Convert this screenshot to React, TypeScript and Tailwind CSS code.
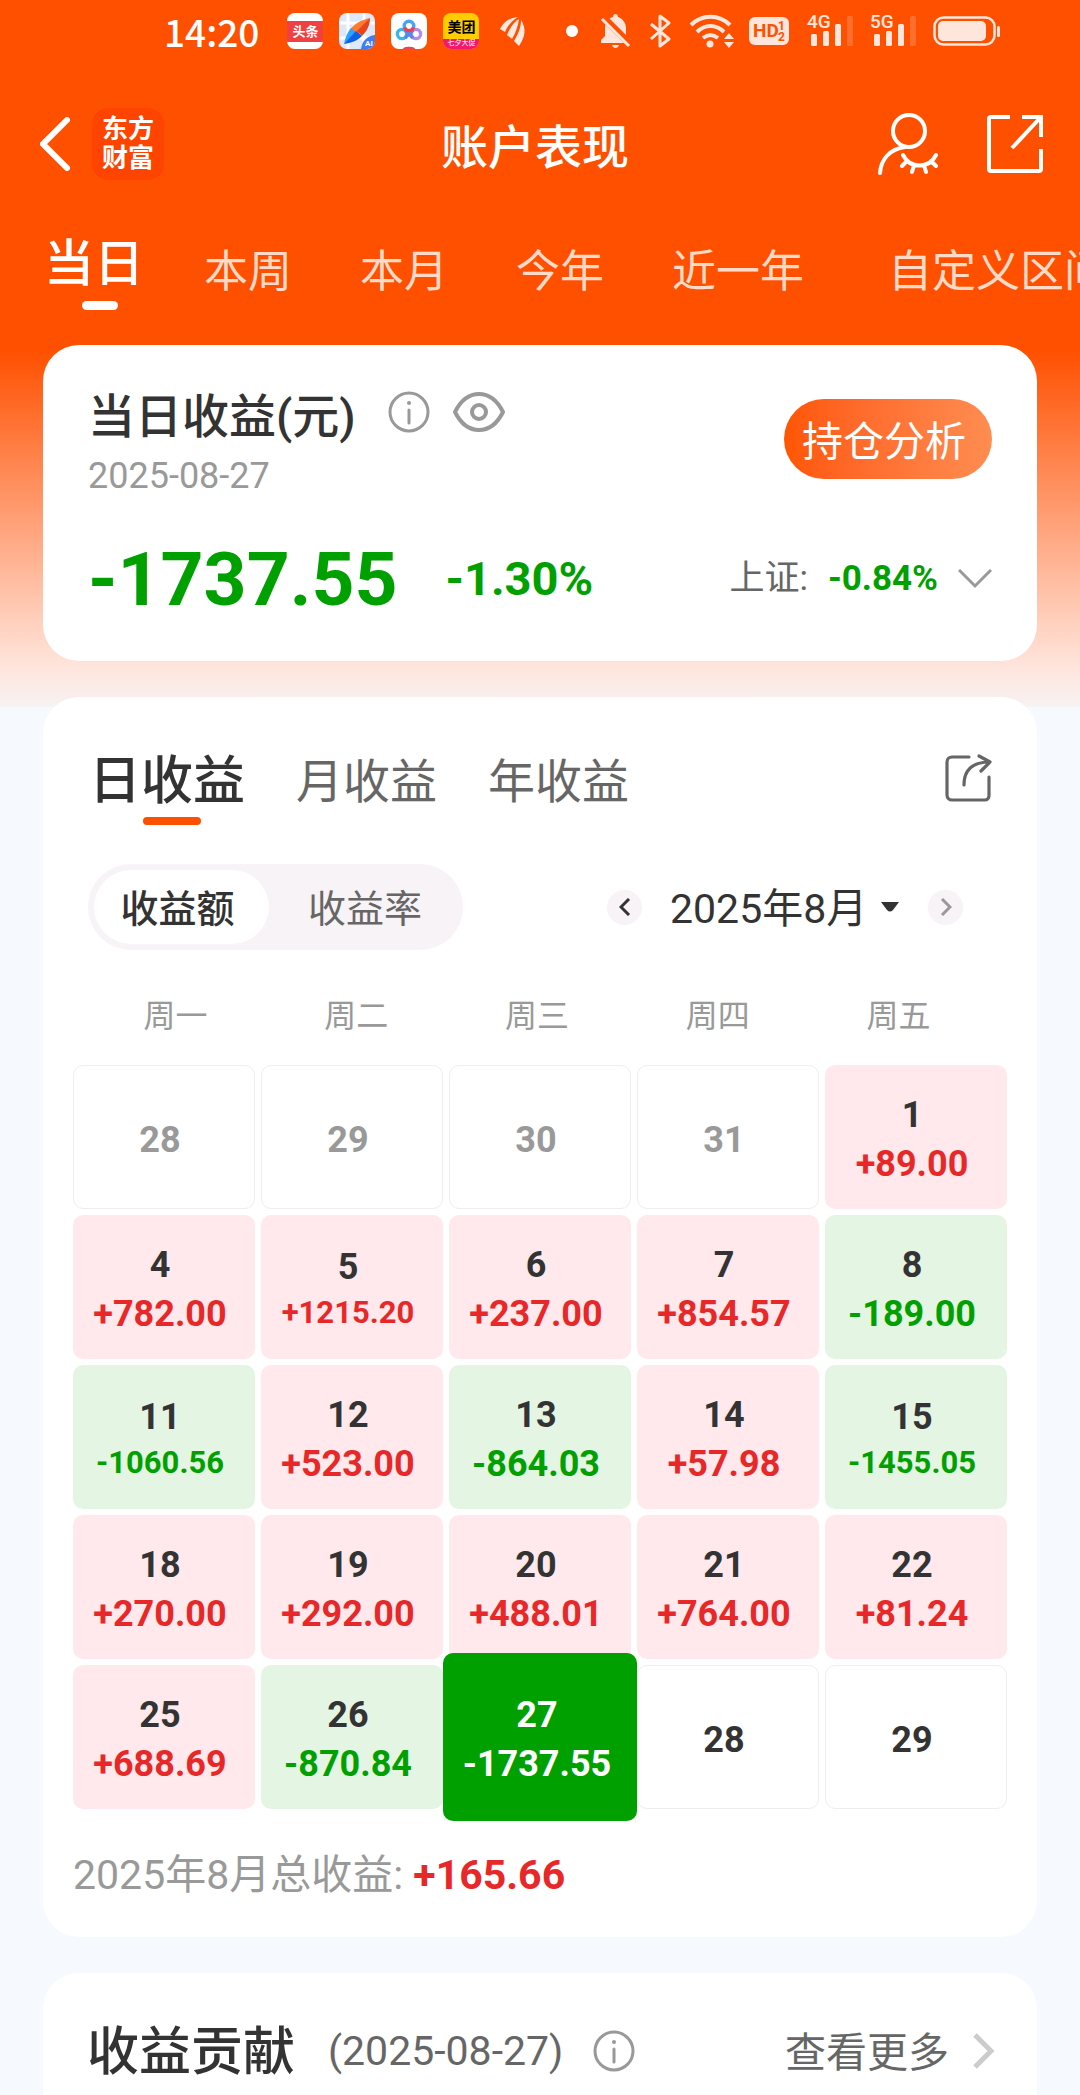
import { useState } from "react";

const ranges = ["当日", "本周", "本月", "今年", "近一年", "自定义区间"];
const tabs = ["日收益", "月收益", "年收益"];
const modes = ["收益额", "收益率"];
const weekdays = ["周一", "周二", "周三", "周四", "周五"];

type Day = { d: number; v?: string; out?: boolean; active?: boolean };

const days: Day[] = [
  { d: 28, out: true }, { d: 29, out: true }, { d: 30, out: true }, { d: 31, out: true }, { d: 1, v: "+89.00" },
  { d: 4, v: "+782.00" }, { d: 5, v: "+1215.20" }, { d: 6, v: "+237.00" }, { d: 7, v: "+854.57" }, { d: 8, v: "-189.00" },
  { d: 11, v: "-1060.56" }, { d: 12, v: "+523.00" }, { d: 13, v: "-864.03" }, { d: 14, v: "+57.98" }, { d: 15, v: "-1455.05" },
  { d: 18, v: "+270.00" }, { d: 19, v: "+292.00" }, { d: 20, v: "+488.01" }, { d: 21, v: "+764.00" }, { d: 22, v: "+81.24" },
  { d: 25, v: "+688.69" }, { d: 26, v: "-870.84" }, { d: 27, v: "-1737.55", active: true }, { d: 28 }, { d: 29 },
];

function InfoIcon() {
  return (
    <svg className="size-[42px] shrink-0" viewBox="0 0 42 42" fill="none" stroke="#999" strokeWidth="3">
      <circle cx="21" cy="21" r="19" />
      <path d="M21 19v13" strokeLinecap="round" />
      <circle cx="21" cy="12" r="2" fill="#999" stroke="none" />
    </svg>
  );
}

function Signal({ label }: { label: string }) {
  return (
    <div className="relative h-9 w-[47px]">
      <span className="absolute top-0 left-0 text-[19px] leading-[18px] font-medium">{label}</span>
      <svg className="size-full" viewBox="0 0 47 36" fill="currentColor">
        <rect x="4" y="21" width="6" height="12" rx="1.5" />
        <rect x="16" y="18" width="6" height="15" rx="1.5" />
        <rect x="28" y="11" width="6" height="22" rx="1.5" />
        <rect x="40" y="3" width="6" height="30" rx="1.5" opacity="0.2" />
      </svg>
    </div>
  );
}

function AppIcons() {
  return (
    <div className="ml-7 flex items-center gap-4">
      <div className="flex size-9 items-center overflow-hidden rounded-lg bg-white">
        <span className="w-full bg-[#f04142] text-center text-[13px] leading-[21px] font-bold">头条</span>
      </div>
      <svg className="size-9 rounded-lg" viewBox="0 0 36 36">
        <rect width="36" height="36" fill="#dde8fb" />
        <path d="M0 10h36M0 25h36M9 0v36M25 0v36" stroke="#fff" strokeWidth="3" />
        <path d="M31 5C22 7 15 11 11 17l8 5z" fill="#ff7a2e" />
        <path d="M31 5 18 18l5 5C28 18 31 12 31 5z" fill="#e8431a" />
        <path d="M5 31C6 25 8 20 12 15l6 5z" fill="#2aa5ff" />
        <path d="M5 31 17 18l6 5C18 28 12 30 5 31z" fill="#0f62e8" />
        <path d="M36 22c-8 1-13 6-14 14h14z" fill="#3f7df0" />
        <text x="26" y="33" fontSize="8" fontWeight="700" fill="#fff">AI</text>
      </svg>
      <svg className="size-9 rounded-lg bg-white" viewBox="0 0 36 36" fill="none" strokeWidth="3.4">
        <circle cx="11" cy="21" r="4.6" stroke="#38b6f1" />
        <circle cx="25" cy="21" r="4.6" stroke="#b48be8" />
        <path d="M14 17l8 8M22 17l-8 8" stroke="#5b86e5" />
        <circle cx="18" cy="13" r="4.8" stroke="#4aa3f0" />
        <path d="M13.5 14.500a4.800 4.800 0 0 0 9 0" stroke="#ef4056" />
        <path d="M12 36c0-3 12-3 12 0z" fill="#ef4056" />
      </svg>
      <div className="flex size-9 flex-col overflow-hidden rounded-lg bg-[#ffcd00] text-center">
        <span className="h-[26px] text-[14px] leading-[28px] font-bold text-black">美团</span>
        <span className="h-[10px] bg-[#f4186c] text-[7px] leading-[9px]">七夕大促</span>
      </div>
      <svg className="ml-1 h-[30px] w-[28px]" viewBox="0 0 28 30" fill="#ffe9df">
        <path d="M19 1C11 2 5 5 1 13l5 3C9 9 13 5 19 1z" />
        <path d="M20 3C14 7 11 12 8 19l5 4C17 16 19 10 20 3z" />
        <path d="M22 4C22 12 19 18 15 25l5 5C27 20 27 12 22 4z" />
      </svg>
    </div>
  );
}

function StatusBar() {
  return (
    <div className="flex h-[62px] items-center pr-20 pl-[164px] text-white">
      <span className="font-['Noto_Sans_CJK_SC',sans-serif] text-[37px] leading-[36px] font-medium">14:20</span>
      <AppIcons />
      <div className="ml-auto flex items-center gap-4 text-[#ffe6dc]">
        <svg className="h-9 w-[18px]" viewBox="0 0 18 36"><circle cx="6" cy="18" r="6" fill="#fff" /></svg>
        <svg className="h-9 w-[34px]" viewBox="0 0 34 36">
          <path d="M1 30v-3l4-4v-8C5 9 9 5 13 4c0-4 5-4 5 0 5 2 8 6 8 11v8l5 4v3zM12 32h7c-1 4-6 4-7 0z" fill="currentColor" />
          <path d="M3 4l28 28" stroke="#ff5000" strokeWidth="7" />
          <path d="M2 6l27 27" stroke="currentColor" strokeWidth="3" />
        </svg>
        <svg className="h-9 w-6" viewBox="0 0 24 36" fill="none" stroke="currentColor" strokeWidth="3">
          <path d="M1 11l18 15-9 7V3l9 7L1 26" strokeLinejoin="round" />
        </svg>
        <svg className="h-9 w-[43px] overflow-visible" viewBox="0 0 43 36" fill="none" stroke="currentColor" strokeWidth="4">
          <path d="M1 12c11-11 28-11 39 0M7 19c8-8 19-8 27 0M13 25c5-4 10-4 15 0" />
          <circle cx="20" cy="31" r="3.500" fill="currentColor" stroke="none" />
          <path d="M34 26l5-6 5 6zM34 29h10l-5 6z" fill="currentColor" stroke="none" />
        </svg>
        <div className="relative h-7 w-10 rounded-md bg-[#ffe6dc] text-[#ff5000]">
          <span className="absolute top-1 left-1 text-[19px] leading-[20px] font-bold">HD</span>
          <span className="absolute top-1 right-1 text-[12px] leading-[11px] font-bold">1<br />2</span>
        </div>
        <div className="pl-[2px]"><Signal label="4G" /></div>
        <Signal label="5G" />
        <svg className="h-9 w-[67px]" viewBox="0 0 67 36" fill="none">
          <rect x="1.500" y="4.500" width="60" height="27" rx="9" stroke="currentColor" strokeWidth="2.500" />
          <rect x="5" y="8" width="48" height="20" rx="5" fill="currentColor" />
          <rect x="64" y="13" width="3" height="11" rx="1.500" fill="currentColor" />
        </svg>
      </div>
    </div>
  );
}

function Header() {
  return (
    <header className="relative flex h-[164px] items-center pr-9 pl-10 text-white">
      <button aria-label="返回">
        <svg className="h-[54px] w-[30px]" viewBox="0 0 30 54" fill="none" stroke="currentColor" strokeWidth="6">
          <path d="M27 3 3 27l24 24" strokeLinecap="round" />
        </svg>
      </button>
      <div className="ml-[22px] flex size-[72px] items-center justify-center rounded-2xl bg-[#ff4400] text-center text-[26px] leading-[29px] font-bold">东方<br />财富</div>
      <h1 className="pointer-events-none absolute inset-x-28 pt-2 pr-[10px] text-center text-[47px] leading-[60px] font-medium">账户表现</h1>
      <div className="ml-auto flex items-center gap-12">
        <button aria-label="隐藏账户">
          <svg className="h-[62px] w-[60px]" viewBox="0 0 60 62" fill="none" stroke="currentColor" strokeWidth="4" strokeLinecap="round">
            <circle cx="31" cy="18" r="16" />
            <path d="M27 34C12 36 3 46 2 60M25 42c7 14 26 14 33 0M29 48l-5 5M36 52l-2 7M46 52l2 7M53 48l5 5" />
          </svg>
        </button>
        <button aria-label="分享">
          <svg className="h-[60px] w-[58px]" viewBox="0 0 58 60" fill="none" stroke="currentColor" strokeWidth="4">
            <path d="M24 3H5a2 2 0 0 0-2 2v50a2 2 0 0 0 2 2h48a2 2 0 0 0 2-2V35M36 3h19v20M54 4 26 34" />
          </svg>
        </button>
      </div>
    </header>
  );
}

function RangeNav() {
  const [range, setRange] = useState("当日");
  return (
    <nav className="flex h-[119px] items-start gap-[68px] overflow-hidden pl-11 whitespace-nowrap">
      {ranges.map((r) =>
        r === range ? (
          <button key={r} className="relative -mr-2 h-[84px] pt-1 text-[50px] leading-[68px] font-medium text-white">
            <span className="block h-20">{r}</span>
            <span className="absolute bottom-0 left-[38px] h-[9px] w-9 rounded-full bg-white" />
          </button>
        ) : (
          <button key={r} onClick={() => setRange(r)} className="pt-3 text-[44px] leading-[68px] text-[#ffdac8] last:ml-4">{r}</button>
        )
      )}
    </nav>
  );
}

function Summary() {
  return (
    <section className="mx-[43px] h-[316px] rounded-[36px] bg-white px-[45px] pt-9">
      <div className="flex items-start justify-between">
        <div>
          <div className="flex items-center">
            <h2 className="pt-[2px] text-[47px] leading-[68px] font-medium text-[#333]">当日收益(元)</h2>
            <button aria-label="说明" className="mb-2 ml-8"><InfoIcon /></button>
            <button aria-label="显示金额" className="mb-2 ml-[22px]">
              <svg className="h-[42px] w-[54px]" viewBox="0 0 54 42" fill="none" stroke="#999" strokeWidth="4">
                <path d="M3 21C15-3 39-3 51 21 39 45 15 45 3 21z" strokeLinejoin="round" />
                <circle cx="27" cy="21" r="7" />
              </svg>
            </button>
          </div>
          <p className="text-[36px] leading-[50px] text-[#999]">2025-08-27</p>
        </div>
        <button className="mt-[18px] h-20 w-[208px] rounded-full bg-linear-to-r from-[#ff5500] to-[#ff8c50] pt-[6px] pr-2 text-[41px] leading-[60px] text-white">持仓分析</button>
      </div>
      <div className="mt-[38px] flex h-20 items-center font-bold text-[#00a000]">
        <span className="text-[75px] leading-[80px]">-1737.55</span>
        <span className="ml-12 text-[47px] leading-[80px]">-1.30%</span>
        <button className="ml-auto flex items-center text-[35px] leading-[80px]">
          <span className="font-normal text-[#666]">上证:</span>
          <span className="ml-5">-0.84%</span>
          <svg className="ml-5 h-5 w-[34px]" viewBox="0 0 34 20" fill="none" stroke="#999" strokeWidth="3"><path d="M1 1l16 16L33 1" /></svg>
        </button>
      </div>
    </section>
  );
}

function DayCell({ d, v, out, active }: Day) {
  // four-digit amounts drop one size so they fit the cell
  const small = v && v.length > 7 && !active;
  const up = v?.startsWith("+");
  const box = !v ? "border border-[#eee] bg-white" : up ? "bg-[#ffe9ec]" : "bg-[#e4f5e3]";
  const body = (
    <>
      <span className={active ? "leading-[49px]" : out ? "leading-[49px] text-[#999]" : "leading-[49px] text-[#333]"}>{d}</span>
      {v && (
        <span className={(small ? "text-[31px] leading-[42px] " : "leading-[49px] ") + (active ? "" : up ? "text-[#e82828]" : "text-[#00a000]")}>{v}</span>
      )}
    </>
  );
  if (active)
    return (
      <button className="relative h-36 text-[36px] font-bold text-white">
        <span className="absolute -inset-x-[6px] -inset-y-3 flex flex-col items-center justify-center rounded-[10px] bg-[#00a000] pt-[6px] pr-[6px]">{body}</span>
      </button>
    );
  return <button className={"flex h-36 flex-col items-center justify-center rounded-[10px] pr-2 text-[36px] font-bold " + (small ? "pt-[2px] " : "pt-[6px] ") + box}>{body}</button>;
}

function Calendar() {
  const [tab, setTab] = useState("日收益");
  const [mode, setMode] = useState("收益额");
  return (
    <section className="mx-[43px] mt-9 rounded-[36px] bg-white px-[30px] pt-12 pb-[30px]">
      <div className="flex items-center gap-[51px] pr-[15px] pl-4">
        {tabs.map((t) =>
          t === tab ? (
            <button key={t} className="relative pt-[2px] text-[52px] leading-[70px] font-medium text-[#333]">
              {t}
              <span className="absolute -bottom-2 left-[54px] h-2 w-[58px] rounded-full bg-[#ff5000]" />
            </button>
          ) : (
            <button key={t} onClick={() => setTab(t)} className="pt-[2px] text-[47px] leading-[70px] text-[#666]">{t}</button>
          )
        )}
        <button aria-label="分享收益" className="mb-[6px] ml-auto">
          <svg className="size-12" viewBox="0 0 48 48" fill="none" stroke="#666" strokeWidth="3.200" strokeLinecap="round" strokeLinejoin="round">
            <path d="M25 3H8a5 5 0 0 0-5 5v33a5 5 0 0 0 5 5h33a4 4 0 0 0 4-4V23" />
            <path d="M20 31C20 15 30 8 46 8M35 2l11 6-9 9" />
          </svg>
        </button>
      </div>

      <div className="mt-[47px] flex items-center pr-11 pl-[15px]">
        <div className="flex h-[86px] w-[375px] rounded-full bg-[#f7f3f7] p-[6px] text-[38px]">
          {modes.map((m) => (
            <button key={m} onClick={() => setMode(m)} className={m === mode ? "w-[175px] rounded-full bg-white pt-1 pr-2 font-medium text-[#333]" : "flex-1 pt-1 pl-1 text-[#666]"}>{m}</button>
          ))}
        </div>
        <div className="ml-auto flex items-center">
          <button aria-label="上个月" className="flex size-[35px] items-center justify-center rounded-full bg-[#f7f3f7]">
            <svg className="h-[18px] w-3" viewBox="0 0 12 18" fill="none" stroke="#333" strokeWidth="3"><path d="M10 1 2 9l8 8" /></svg>
          </button>
          <select aria-label="月份" defaultValue="2025年8月" className="ml-7 appearance-none pt-1 text-[41px] leading-[56px] text-[#333]">
            <option>2025年7月</option>
            <option>2025年8月</option>
          </select>
          <svg className="ml-3 h-[10px] w-5" viewBox="0 0 20 10" fill="#333"><path d="M1 0h18l-6 8q-3 3-6 0z" /></svg>
          <button aria-label="下个月" className="ml-7 flex size-[35px] items-center justify-center rounded-full bg-[#f7f3f7]">
            <svg className="h-[18px] w-3" viewBox="0 0 12 18" fill="none" stroke="#999" strokeWidth="3"><path d="M2 1l8 8-8 8" /></svg>
          </button>
        </div>
      </div>

      <div className="mt-11 grid grid-cols-5 pr-[18px] pl-3 text-center text-[32px] leading-[44px] text-[#999]">
        {weekdays.map((w) => <span key={w}>{w}</span>)}
      </div>
      <div className="mt-[27px] grid grid-cols-5 gap-[6px]">
        {days.map((x, i) => <DayCell key={i} {...x} />)}
      </div>
      <p className="mt-[34px] text-[41px] leading-[64px] text-[#999]">
        2025年8月总收益: <b className="text-[#e82828]">+165.66</b>
      </p>
    </section>
  );
}

function Contribution() {
  return (
    <section className="mx-[43px] mt-9 flex flex-1 items-start rounded-t-[36px] bg-white pt-11 pr-[42px] pl-11">
      <div className="flex h-[68px] w-full items-center">
        <h2 className="pt-1 text-[52px] leading-[68px] font-medium text-[#333]">收益贡献</h2>
        <span className="ml-[33px] text-[41px] leading-[68px] text-[#666]">(2025-08-27)</span>
        <button aria-label="收益贡献说明" className="ml-[30px]"><InfoIcon /></button>
        <a href="#more" className="ml-auto flex items-center text-[41px] leading-[68px] text-[#666]">
          <span className="pt-1">查看更多</span>
          <svg className="ml-6 h-9 w-[22px]" viewBox="0 0 22 36" fill="none" stroke="#ccc" strokeWidth="5"><path d="M2 2l16 16L2 34" /></svg>
        </a>
      </div>
    </section>
  );
}

export default function App() {
  return (
    <main className="flex min-h-screen flex-col overflow-hidden bg-[#f6faff] bg-[linear-gradient(#ff5000_350px,#ffe4db_665px,#f7f2f2_706px,#f6faff_708px)] font-['Roboto','Noto_Sans_CJK_SC',sans-serif]">
      <StatusBar />
      <Header />
      <RangeNav />
      <Summary />
      <Calendar />
      <Contribution />
    </main>
  );
}
